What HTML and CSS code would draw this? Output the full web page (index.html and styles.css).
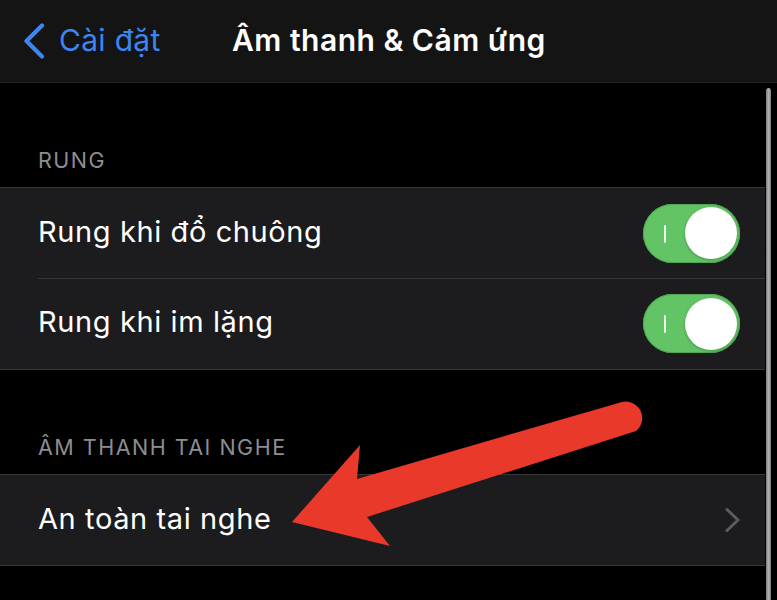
FILE: index.html
```html
<!DOCTYPE html>
<html lang="vi">
<head>
<meta charset="utf-8">
<title>Âm thanh &amp; Cảm ứng</title>
<link rel="stylesheet" href="styles.css">
</head>
<body>
<div class="screen">
  <header class="nav">
    <div class="back">
      <svg class="back-icon" width="24" height="36" viewBox="0 0 24 36"><path d="M20 2.5 L4.5 18 L20 33.5" fill="none" stroke="#3d86f2" stroke-width="4.2" stroke-linecap="round" stroke-linejoin="round"/></svg>
      <span class="back-label">Cài đặt</span>
    </div>
    <h1 class="nav-title">Âm thanh &amp; Cảm ứng</h1>
  </header>

  <div class="section-head"><span>RUNG</span></div>
  <div class="group">
    <div class="row">
      <span class="row-label">Rung khi đổ chuông</span>
      <div class="switch"><span class="switch-mark"></span><span class="knob"></span></div>
    </div>
    <div class="row">
      <span class="row-label">Rung khi im lặng</span>
      <div class="switch"><span class="switch-mark"></span><span class="knob"></span></div>
    </div>
  </div>

  <div class="section-head"><span>ÂM THANH TAI NGHE</span></div>
  <div class="group">
    <div class="row">
      <span class="row-label">An toàn tai nghe</span>
      <svg class="chevron" width="18" height="26" viewBox="0 0 18 26"><path d="M3 2.5 L14 13 L3 23.5" fill="none" stroke="#5c5c61" stroke-width="3" stroke-linecap="round" stroke-linejoin="round"/></svg>
    </div>
  </div>

  <div class="edge"><span class="scroll-bar"></span></div>

  <svg class="annotation" width="777" height="600" viewBox="0 0 777 600">
    <path d="M622 402 L357 479 L360 445 L292 522 L390 546 L367 517 L636 431 A16.5 16.5 0 0 0 622 402 Z" fill="#e8392b"/>
  </svg>
</div>
</body>
</html>
```

FILE: styles.css
```css
* { box-sizing: border-box; }
html, body { margin: 0; padding: 0; background: #000; }
body {
  font-family: Inter, "Noto Sans", "DejaVu Sans", sans-serif;
  color: #fff;
}
.screen {
  position: relative;
  width: 777px;
  height: 600px;
  overflow: hidden;
  background: #000;
}
.nav {
  height: 83px;
  background: #141414;
  border-bottom: 1px solid #242424;
  display: flex;
  align-items: center;
  padding-left: 22px;
  padding-bottom: 2px;
}
.back {
  display: flex;
  align-items: center;
  gap: 13px;
  width: 210px;
}
.back-icon { display: block; margin-top: 1px; }
.back-label {
  color: #3d86f2;
  font-size: 30px;
  letter-spacing: 0.3px;
}
.nav-title {
  margin: 0;
  font-size: 30px;
  font-weight: 600;
  letter-spacing: 0.5px;
}
.section-head {
  height: 104px;
  display: flex;
  align-items: flex-end;
  padding-left: 38px;
  padding-bottom: 14px;
  color: #8d8d92;
  font-size: 21.5px;
  letter-spacing: 1.5px;
}
.group {
  background: #1c1c1e;
  border-top: 1px solid #363638;
  border-bottom: 1px solid #363638;
}
.row {
  height: 90px;
  display: flex;
  align-items: center;
  justify-content: space-between;
  padding-left: 38px;
  padding-right: 37px;
  position: relative;
}
.row + .row { height: 91px; }
.row + .row::before {
  content: "";
  position: absolute;
  left: 38px;
  right: 0;
  top: 0;
  height: 1px;
  background: #363638;
}
.row-label {
  font-size: 29px;
  letter-spacing: 0.6px;
  padding-bottom: 4px;
}
.switch {
  width: 97px;
  height: 59px;
  border-radius: 30px;
  background: #62c464;
  position: relative;
  display: flex;
  align-items: center;
  justify-content: flex-end;
  padding-right: 3px;
  box-shadow: inset 0 0 0 1px #4fa552;
}
.switch-mark {
  position: absolute;
  left: 21px;
  top: 21px;
  width: 2px;
  height: 18px;
  background: #e9f6e9;
  border-radius: 1px;
}
.knob {
  width: 52px;
  height: 52px;
  border-radius: 50%;
  background: #fff;
  box-shadow: 0 1px 3px rgba(0,0,0,0.25);
}
.chevron { display: block; margin-right: -2px; }
.edge {
  position: absolute;
  top: 84px;
  right: 0;
  width: 12px;
  bottom: 0;
  background: #000;
}
.scroll-bar {
  position: absolute;
  left: 1px;
  top: 4px;
  width: 5px;
  bottom: 0;
  border-radius: 3px 3px 0 0;
  background: linear-gradient(90deg, #7c7c7c, #b0b0b0 50%, #7c7c7c);
}
.annotation {
  position: absolute;
  left: 0;
  top: 0;
  pointer-events: none;
}
```
